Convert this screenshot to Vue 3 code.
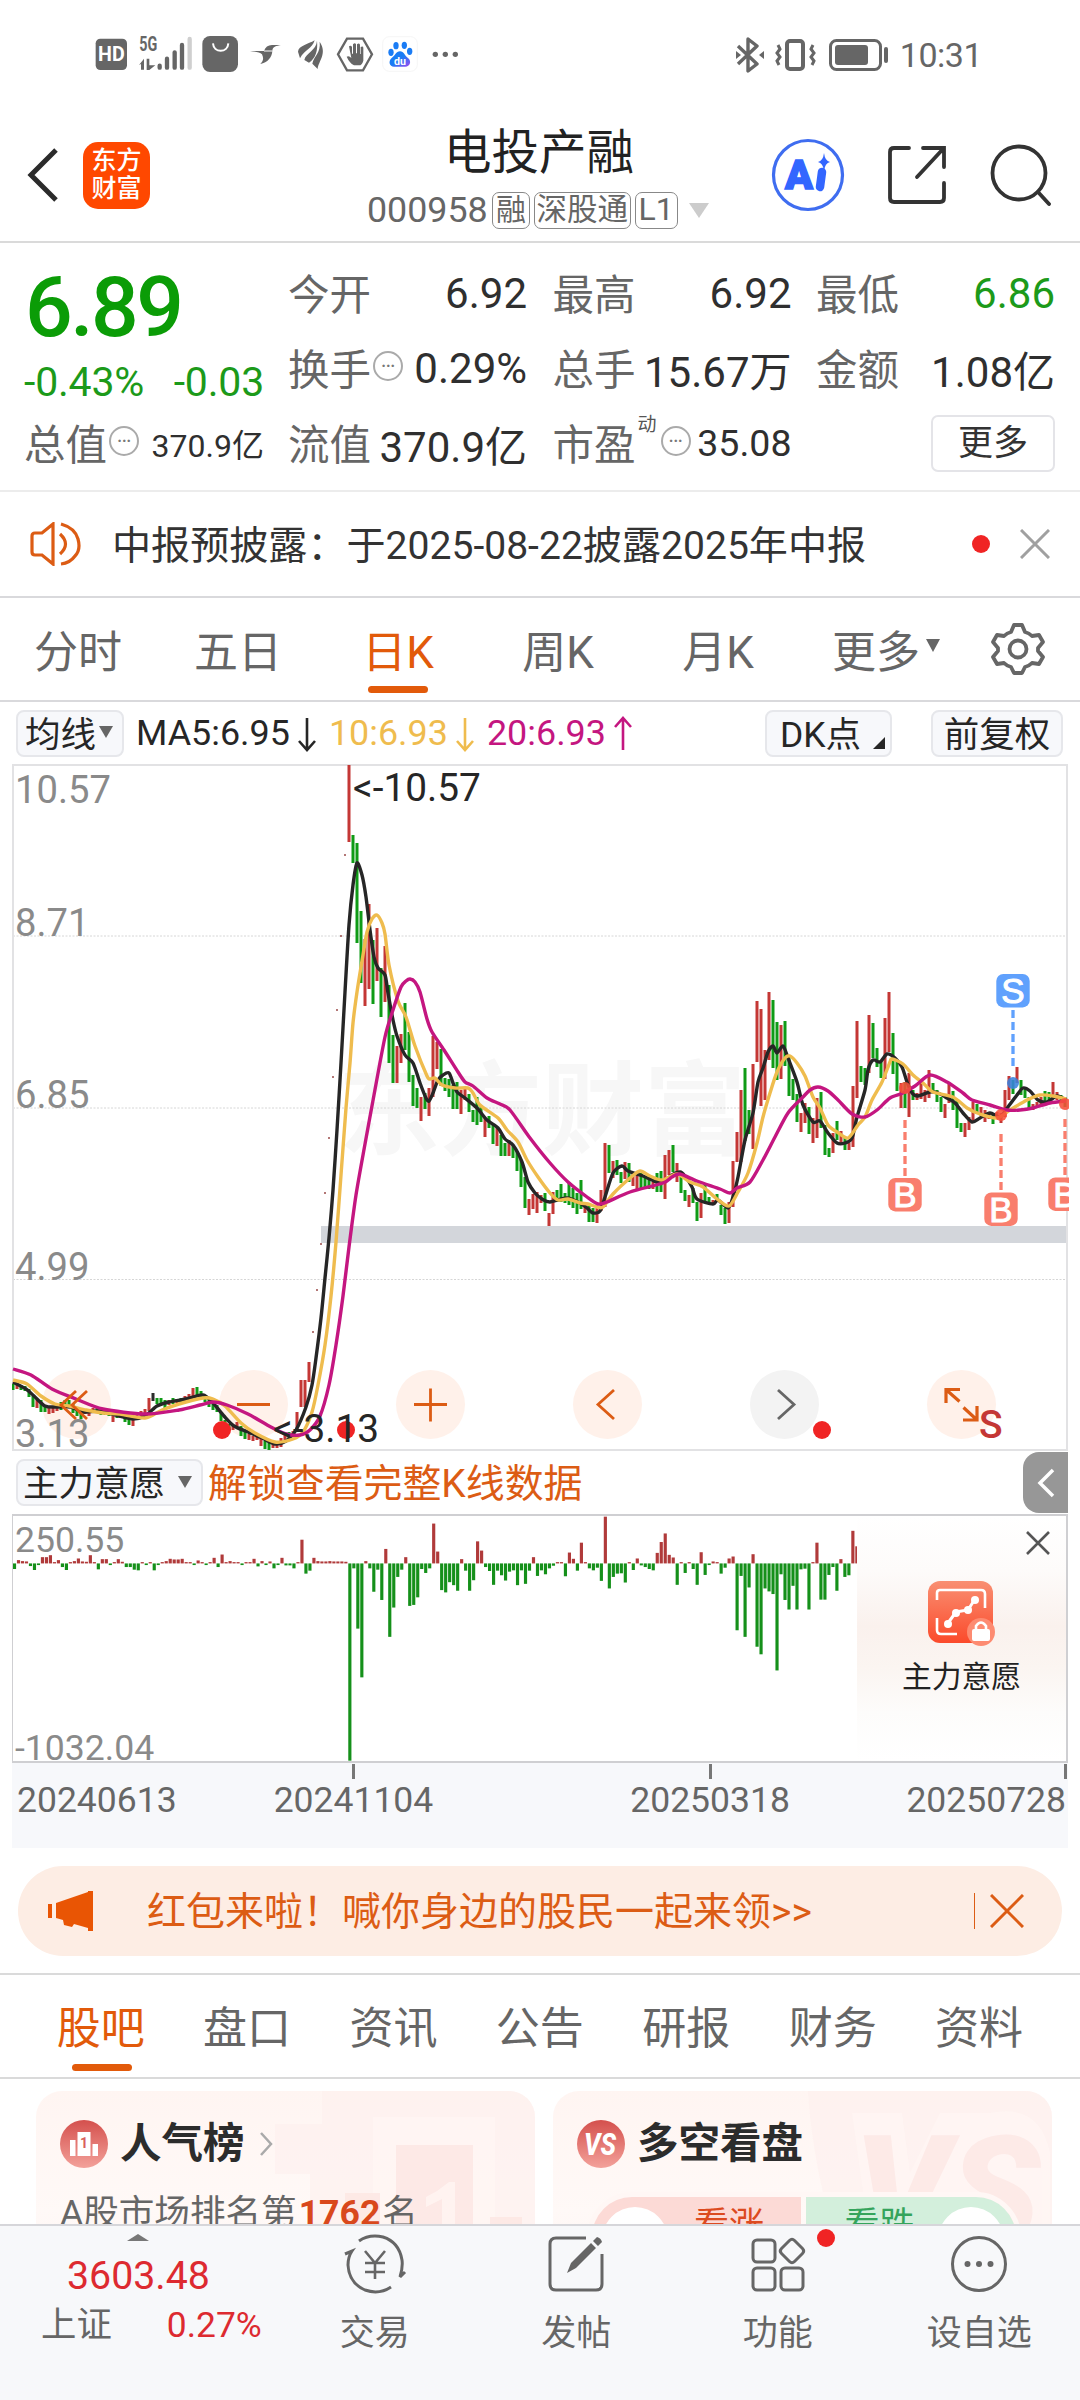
<script setup>
const kTabs = ['分时', '五日', '日K', '周K', '月K']
const infoTabs = ['股吧', '盘口', '资讯', '公告', '研报', '财务', '资料']

// Daily candles: direction + high/low in chart units, one every 4 units
const candleText = `g1384-1390 r1384-1389 g1385-1390 g1386-1391 g1389-1397 g1396-1407 r1400-1408 g1400-1412 g1405-1412 r1408-1414 r1406-1413 r1407-1411 g1402-1410 g1400-1408 g1400-1407 g1404-1413 g1408-1416 g1412-1419 r1410-1414 r1409-1416 r1408-1413 g1408-1413 g1410-1415 g1411-1415 g1411-1416 r1413-1422 g1413-1418 r1413-1418 g1416-1422 g1417-1425 r1416-1426 r1413-1420 r1411-1416 r1409-1416 r1398-1411 k1393-1401 g1398-1404 g1398-1404 g1400-1408 r1400-1405 g1398-1404 r1399-1403 g1398-1403 r1396-1403 r1394-1399 r1388-1397 g1387-1396 g1391-1397 g1396-1402 g1400-1407 g1402-1410 g1405-1412 g1413-1421 g1420-1426 g1424-1430 r1425-1430 r1422-1428 g1426-1436 g1431-1439 r1434-1440 r1436-1441 r1436-1440 r1438-1446 g1441-1449 g1443-1450 r1443-1448 r1442-1448 r1438-1447 r1432-1442 g1432-1438 r1431-1437 r1412-1430 r1380-1407 r1380-1407 r1362-1382 d1331-1333 d1289-1291 d1243-1245 d1192-1194 d1137-1139 d1076-1078 d1009-1011 d935-937 d854-856 r765-842 g835-863 g843-943 g911-983 r939-1006 r904-989 g940-1004 r928-981 g968-1017 r946-1002 g985-1063 g1035-1083 r1046-1083 r1034-1063 g1003-1050 g1032-1082 g1075-1106 g1088-1108 r1097-1121 g1093-1109 r1088-1116 r1036-1097 r1042-1069 g1049-1086 g1078-1091 g1079-1097 g1085-1109 g1082-1109 r1090-1114 r1087-1100 g1094-1112 g1110-1122 g1097-1125 g1105-1122 r1118-1137 g1116-1128 g1125-1144 r1127-1146 g1135-1156 g1143-1156 r1140-1156 g1145-1158 g1151-1171 g1160-1187 g1177-1208 r1199-1215 r1194-1209 r1192-1213 r1195-1203 g1193-1211 r1213-1226 r1192-1214 g1190-1202 g1184-1202 g1193-1203 g1182-1205 g1188-1208 g1193-1214 g1180-1209 r1202-1213 g1203-1222 g1208-1222 r1208-1223 r1190-1211 r1143-1207 g1145-1173 r1161-1178 g1160-1175 g1172-1183 r1162-1179 g1163-1182 r1172-1186 r1173-1189 g1173-1188 g1178-1189 g1180-1189 r1182-1189 g1173-1192 g1171-1192 r1155-1199 r1150-1175 g1145-1172 r1163-1182 g1175-1193 g1190-1201 r1195-1207 g1188-1203 g1202-1221 r1193-1218 g1185-1202 g1197-1203 r1200-1205 g1194-1202 g1205-1215 g1208-1224 r1202-1223 r1161-1207 r1132-1162 r1090-1162 g1068-1141 g1110-1134 r1064-1149 r1001-1062 r1009-1106 r1050-1100 r992-1060 g1000-1068 g1022-1080 r1025-1079 g1021-1066 g1055-1096 g1079-1100 g1094-1122 r1113-1132 r1103-1123 g1107-1134 r1118-1143 r1098-1138 g1092-1128 g1125-1155 g1148-1157 r1133-1153 g1121-1140 r1131-1143 g1137-1150 r1143-1150 r1086-1147 r1021-1098 g1066-1082 g1068-1085 r1015-1073 g1023-1058 g1048-1067 g1060-1078 r1018-1079 r992-1052 g1033-1074 g1060-1091 r1083-1108 g1082-1108 r1073-1117 g1090-1100 r1093-1100 r1082-1099 r1090-1102 r1070-1098 g1083-1093 g1090-1102 g1097-1112 r1104-1118 r1083-1103 g1091-1110 g1100-1128 g1123-1132 r1123-1137 r1117-1130 r1102-1122 g1104-1113 r1107-1116 r1110-1122 r1112-1119 g1115-1124 r1112-1119 r1113-1123 r1090-1117 r1076-1100 g1080-1094 r1067-1083 g1080-1095 g1087-1098 g1097-1108 r1104-1110 r1102-1108 r1097-1106 g1091-1103 g1092-1102 r1082-1098 r1092-1100 g1095-1102 g1097-1107`
const palette = { r: '#c43735', g: '#0f9b16', k: '#2b2b2b', d: '#8a2f2d' }
const candles = candleText.split(/\s+/).map((t, i) => {
  const [hi, lo] = t.slice(1).split('-').map(Number)
  return { x: 13 + i * 4, y: hi, h: lo - hi, w: t[0] === 'd' ? 1.3 : 3, c: palette[t[0]] }
})

function smooth(text) {
  const p = text.trim().split(/\s+/).map((s) => s.split(',').map(Number))
  let d = `M${p[0]}`
  for (let i = 0; i < p.length - 1; i++) {
    const a = p[i - 1] || p[i], b = p[i], c = p[i + 1], e = p[i + 2] || c
    const k = 7.5
    d += `C${b[0] + (c[0] - a[0]) / k},${b[1] + (c[1] - a[1]) / k} ${c[0] - (e[0] - b[0]) / k},${c[1] - (e[1] - b[1]) / k} ${c}`
  }
  return d
}
const ma5 = smooth('13,1382 26,1389 34,1396 45,1406 57,1407 71,1407 83,1412 100,1411 119,1416 133,1419 145,1416 157,1406 169,1402 186,1399 203,1395 213,1403 224,1416 234,1426 248,1432 262,1438 275,1444 286,1441 296,1430 306,1407 312,1385 316,1358 321,1318 325,1278 329,1238 333,1190 337,1130 341,1063 345,992 349,925 353,885 357,863 362,875 366,897 370,930 374,957 378,968 385,975 388,993 393,1020 397,1036 405,1055 413,1063 420,1083 426,1098 429,1101 433,1093 438,1080 443,1075 449,1073 453,1083 457,1092 465,1098 477,1108 487,1120 498,1128 505,1139 513,1145 522,1162 528,1182 535,1193 542,1199 550,1202 567,1198 580,1203 587,1208 593,1213 600,1211 605,1197 613,1173 622,1166 628,1171 643,1176 657,1182 665,1181 672,1175 680,1172 685,1176 692,1187 697,1199 713,1204 718,1200 728,1208 733,1197 738,1177 745,1140 753,1113 758,1082 763,1068 768,1052 773,1046 777,1053 783,1046 788,1058 797,1082 803,1105 813,1122 820,1121 828,1133 837,1143 845,1143 852,1138 857,1117 865,1090 868,1070 873,1060 880,1062 887,1054 895,1058 902,1067 907,1082 912,1093 918,1096 930,1092 938,1093 947,1098 955,1103 963,1113 972,1122 980,1118 990,1113 1000,1117 1008,1107 1017,1095 1023,1088 1030,1091 1038,1100 1047,1102 1057,1096 1066,1100')
const ma10 = smooth('13,1380 27,1384 41,1396 55,1404 69,1406 86,1410 103,1413 120,1414 145,1418 162,1410 179,1404 203,1398 213,1399 225,1406 241,1423 255,1433 275,1442 293,1439 303,1432 312,1412 318,1385 325,1345 331,1296 336,1242 341,1175 346,1108 350,1063 353,1023 357,992 362,961 367,932 372,919 377,915 382,923 385,934 389,965 398,1001 406,1017 415,1046 427,1076 430,1079 435,1078 442,1085 455,1088 468,1088 473,1093 480,1105 498,1118 507,1130 518,1142 527,1160 538,1177 550,1193 558,1200 568,1199 580,1203 588,1204 597,1207 603,1207 613,1194 630,1178 640,1171 650,1176 662,1180 677,1174 690,1182 703,1187 717,1199 729,1206 738,1192 748,1173 757,1143 763,1117 770,1093 777,1072 785,1058 790,1056 797,1063 805,1076 813,1097 820,1108 828,1125 837,1132 848,1138 858,1125 865,1117 872,1100 882,1082 890,1062 892,1059 903,1064 913,1075 923,1083 933,1092 953,1097 967,1108 980,1114 997,1118 1010,1110 1027,1100 1040,1095 1053,1096 1066,1099')
const ma20 = smooth('13,1369 31,1375 52,1389 76,1399 103,1409 145,1414 179,1410 200,1405 213,1402 227,1405 248,1414 269,1426 286,1434 300,1435 310,1430 320,1416 329,1385 336,1345 343,1296 349,1247 356,1195 365,1144 374,1095 385,1037 393,1010 401,987 406,981 410,979 415,982 420,992 427,1019 432,1032 444,1050 458,1072 465,1082 473,1086 487,1098 500,1104 510,1110 530,1138 550,1163 568,1182 587,1197 598,1204 607,1202 630,1192 663,1183 672,1177 680,1174 697,1181 720,1189 730,1193 737,1188 750,1182 763,1160 775,1137 788,1113 803,1097 810,1090 818,1087 828,1091 838,1100 852,1114 865,1117 877,1110 890,1098 903,1093 915,1086 930,1075 947,1082 963,1093 972,1100 990,1105 1007,1110 1020,1110 1033,1108 1050,1103 1066,1101')

const signals = [
  { t: 'B', x: 905, dot: 1088, from: 1120, to: 1177, y: 1178, c: '#f97e6d' },
  { t: 'B', x: 1001, dot: 1115, from: 1134, to: 1191, y: 1192.5, c: '#f97e6d' },
  { t: 'B', x: 1065, dot: 1104, from: 1119, to: 1176, y: 1177.5, c: '#f97e6d' },
  { t: 'S', x: 1013, dot: 1083, from: 1010, to: 1066, y: 974, c: '#60a1fd' },
]
const chartButtons = [76.5, 253.5, 430.5, 607.5, 784.5, 961.5]

// Net intention bars around the zero line at y=367
const barText = '20:384 43:375 48:387 89:378 95:387 141:385 182:378 188:378 194:386 199:388 211:372 222:388 316:378 374:376 397:382 414:373 420:373 426:382 443:398 449:389 508:966 513:382 519:565 525:713 536:382 542:453 548:386 554:478 565:590 571:501 577:408 583:386 594:496 600:493 606:470 612:384 617:396 623:382 641:448 647:455 653:424 658:433 664:450 676:389 682:450 688:418 705:378 711:390 716:432 722:389 728:403 734:419 740:392 746:388 751:433 757:388 763:429 769:389 780:405 786:388 792:400 798:382 804:374 821:406 838:389 856:382 861:388 867:380 873:420 885:443 891:408 897:398 902:397 908:425 920:387 931:373 937:378 943:384 949:388 983:432 995:396 1006:384 1012:432 1024:402 1047:398 1053:380 1071:570 1076:405 1082:590 1088:440 1100:620 1105:643 1111:443 1117:452 1123:460 1129:692 1134:400 1140:478 1146:507 1152:435 1158:507 1163:385 1169:383 1175:507 1192:477 1198:477 1204:402 1210:378 1216:450 1227:408 1233:403 25:357 31:360 37:361 60:348 66:348 72:342 83:357 107:360 112:352 118:361 124:362 130:342 147:354 153:354 170:354 176:362 240:360 246:353 252:355 258:355 264:353 287:358 310:350 321:340 333:360 368:353 380:360 391:361 409:350 438:295 455:350 461:360 467:361 473:361 479:360 485:361 490:361 496:361 502:362 531:360 560:323 589:348 629:246 635:331 670:354 693:300 699:328 774:348 827:334 832:353 844:304 879:225 925:352 954:335 960:302 966:276 972:341 978:349 1018:333 1036:361 1059:352 1065:346 1094:339 1187:304 1222:354 1239:268 1244:315'
const pitch = 5.812
const slots = {}
for (let i = 0; i < 212; i++) slots[i] = 367 + (i % 3 ? -4 : 5)
for (const t of barText.split(' ')) {
  const [x, y] = t.split(':').map(Number)
  slots[Math.round((x - 20) / pitch)] = y
}
const bars = Object.entries(slots).map(([i, y]) => ({
  x: 20 + i * pitch - 2.1,
  y: Math.min(y, 367),
  h: Math.abs(y - 367),
  c: y < 367 ? '#b03a3a' : '#15901a',
}))
</script>

<template>
  <div class="screen">
    <header class="status">
      <svg class="status-left" width="400" height="60" viewBox="0 0 1200 180">
        <rect x="47" y="41" width="94" height="94" rx="14" fill="#666" />
        <text x="94" y="109" text-anchor="middle" font-size="58" font-weight="700" fill="#fff" textLength="80" lengthAdjust="spacingAndGlyphs">HD</text>
        <text x="178" y="79" font-size="58" font-weight="700" fill="#666" textLength="54" lengthAdjust="spacingAndGlyphs">5G</text>
        <g stroke="#666" stroke-width="13" stroke-linecap="round">
          <path d="M239 122v6M261 101v27M284 82v46M306 60v68" />
          <path d="M329 42v86" stroke="#cfcfcf" />
        </g>
        <path d="M177 120l15-19v33h-9v-17zM200 101h8v20h18l-18 14h-8z" fill="#666" />
        <rect x="367" y="33" width="107" height="108" rx="23" fill="#666" />
        <path d="M399 55c2 30 44 30 46 0" fill="none" stroke="#fff" stroke-width="6" />
        <path d="M510 78h42c4-12 12-18 24-18h27c-13 3-25 3-26 18-1 19-14 35-36 39 10-11 10-18 5-29-6-7-20-8-36-10z" fill="#666" />
        <path d="M552 78h26" stroke="#fff" stroke-width="3" />
        <path d="M704 46C684 58 656 62 654 80l6 20c14-26 36-28 44-54zM711 47c-2 30-34 36-38 58l14 8c20-14 27-36 24-66zM719 50c4 34-18 44-22 66l16 16c2-24 30-46 6-82z" fill="#666" />
        <path d="M801 41h48l27 47-27 48h-48l-27-48z" fill="none" stroke="#666" stroke-width="7" />
        <path d="M807 64q6-5 9 2v20h3V58q6-6 9 0v27h3V58q6-5 9 1v28h2V66q8-4 8 3v38q-4 14-13 14h-15q-14-8-22-26 8-3 14 4z" fill="#666" />
        <rect x="908" y="35" width="104" height="104" rx="20" fill="#fff" stroke="#f0f0f0" stroke-width="2" />
        <defs>
          <linearGradient id="paw" x1="0" y1="0" x2="1" y2="1">
            <stop offset=".5" stop-color="#1a7cf5" /><stop offset="1" stop-color="#a04bf0" />
          </linearGradient>
        </defs>
        <g fill="#1a7cf5"><ellipse cx="948" cy="62" rx="8" ry="11" /><ellipse cx="973" cy="61" rx="8" ry="11" /><ellipse cx="933" cy="82" rx="8" ry="11" /><ellipse cx="989" cy="79" rx="8" ry="11" /></g>
        <path d="M960 79c12 0 14 14 24 20 12 10 6 26-8 26h-34c-14 0-18-16-7-26 10-6 13-20 25-20z" fill="url(#paw)" />
        <text x="960" y="119" text-anchor="middle" font-size="32" font-weight="700" fill="#fff">du</text>
        <g fill="#666"><circle cx="1066" cy="88" r="8" /><circle cx="1096" cy="88" r="8" /><circle cx="1126" cy="88" r="8" /></g>
      </svg>
      <div class="status-right">
        <svg width="154" height="36" viewBox="0 0 154 36" fill="none" stroke="#666">
          <path d="M2 9l19 18-9 7V2l9 7L2 27" stroke-width="3.400" stroke-linejoin="round" />
          <path d="M0 14l5 4-5 4M28 14l-5 4 5 4" fill="#666" stroke="none" />
          <rect x="51" y="4" width="16" height="28" rx="3" stroke-width="4" />
          <path d="M42 8l2 4-3 4 3 4-3 4 2 4M77 8l-2 4 3 4-3 4 3 4-2 4" stroke-width="3" />
          <rect x="94.500" y="3.500" width="50" height="29" rx="6" stroke-width="3" />
          <rect x="99" y="8" width="33" height="20" rx="3" fill="#666" stroke="none" />
          <path d="M150 12v12" stroke-width="4" stroke-linecap="round" />
        </svg>
        <span>10:31</span>
      </div>
    </header>

    <nav class="head">
      <div class="head-left">
        <svg width="32" height="56" viewBox="0 0 32 56" fill="none" stroke="#2b2b2b" stroke-width="5"><path d="M30 3L5 28l25 25" /></svg>
        <div class="logo"><span>东方</span><span>财富</span></div>
      </div>
      <div class="head-mid">
        <h1>电投产融</h1>
        <div class="code"><span class="num">000958</span><i>融</i><i class="wide">深股通</i><i class="lv">L1</i><b></b></div>
      </div>
      <div class="head-right">
        <svg width="74" height="74" viewBox="0 0 74 74">
          <circle cx="37" cy="37" r="34.500" fill="none" stroke="#3f6df0" stroke-width="3.200" />
          <text x="14" y="51" font-size="41" font-weight="900" fill="#3366ff" stroke="#3366ff" stroke-width="1.500">A</text>
          <path d="M51 34l-2 15" stroke="#3366ff" stroke-width="8.500" stroke-linecap="round" />
          <path d="M53 15q1 8 6 9-5 1-6 9-1-8-6-9 5-1 6-9z" fill="#3366ff" />
        </svg>
        <svg width="62" height="62" viewBox="0 0 62 62" fill="none" stroke="#333" stroke-width="3.800" stroke-linecap="round">
          <path d="M23 4H8q-4 0-4 4v46q0 4 4 4h46q4 0 4-4V39M37 4h21v19M57 5L31 33" />
        </svg>
        <svg width="62" height="64" viewBox="0 0 62 64" fill="none" stroke="#333" stroke-width="3.800" stroke-linecap="round">
          <circle cx="30" cy="30" r="26.500" /><path d="M49 49l11 12" />
        </svg>
      </div>
    </nav>

    <section class="quote">
      <div class="main">
        <div class="price">6.89</div>
        <div class="chg"><span>-0.43%</span><span>-0.03</span></div>
        <div class="cell"><label>总值</label><em>…</em><span class="v small">370.9亿</span></div>
      </div>
      <div class="grid">
        <div class="cell"><label>今开</label><span class="v">6.92</span></div>
        <div class="cell"><label>最高</label><span class="v">6.92</span></div>
        <div class="cell"><label>最低</label><span class="v green">6.86</span></div>
        <div class="cell"><label>换手</label><em>…</em><span class="v">0.29%</span></div>
        <div class="cell"><label>总手</label><span class="v">15.67万</span></div>
        <div class="cell"><label>金额</label><span class="v">1.08亿</span></div>
        <div class="cell"><label>流值</label><span class="v">370.9亿</span></div>
        <div class="cell"><label>市盈</label><sup>动</sup><em>…</em><span class="v mid">35.08</span></div>
        <div class="cell"><span class="more">更多</span></div>
      </div>
    </section>

    <section class="notice">
      <svg width="52" height="44" viewBox="0 0 52 44" fill="none" stroke="#dc5c14" stroke-width="3.200">
        <path d="M2 14q0-3 3-3h7L23 2v40L12 33H5q-3 0-3-3zM30 12q11 10 0 20M31 2q14 4 17 15t-3 17q-5 7-14 8" />
      </svg>
      <span class="notice-text">中报预披露：于2025-08-22披露2025年中报</span>
      <b class="dot"></b>
      <svg width="30" height="30" viewBox="0 0 30 30" stroke="#a0a0a0" stroke-width="3"><path d="M1 1l28 28M29 1L1 29" /></svg>
    </section>

    <nav class="ktabs">
      <span v-for="(t, i) in kTabs" :key="t" :class="{ on: i === 2 }">{{ t }}</span>
      <span class="ktabs-more">更多<b></b></span>
      <svg class="gear" width="54" height="54" viewBox="0 0 54 54" fill="none" stroke="#666" stroke-width="3.800" stroke-linejoin="round">
        <path d="M23 3h8l3 7q4 1 7 4l7-1 4 7-5 6v3l5 6-4 7-7-1q-3 3-7 4l-3 6h-8l-3-6q-4-1-7-4l-7 1-4-7 5-6v-3l-5-6 4-7 7 1q3-3 7-4z" /><circle cx="27" cy="27" r="8.500" />
      </svg>
    </nav>

    <div class="ma">
      <span class="chip"><span>均线</span><b class="tri"></b></span>
      <span class="ma-v">MA5:6.95<svg width="20" height="36" viewBox="0 0 20 36"><path d="M10 2v32M2 25l8 9 8-9" /></svg></span>
      <span class="ma-v yellow">10:6.93<svg width="20" height="36" viewBox="0 0 20 36"><path d="M10 2v32M2 25l8 9 8-9" /></svg></span>
      <span class="ma-v pink">20:6.93<svg width="20" height="36" viewBox="0 0 20 36"><path d="M10 34V2M2 11l8-9 8 9" /></svg></span>
      <span class="chip dk"><span>DK点</span><b></b></span>
      <span class="chip"><span>前复权</span></span>
    </div>

    <svg class="chart" width="1057" height="687" viewBox="12 764 1057 687">
      <text x="338" y="1147" font-size="102" font-weight="700" fill="#f7f7f7" textLength="408">东方财富</text>
      <circle v-for="x in chartButtons" :key="x" :cx="x" cy="1404.500" r="34.500" :fill="x === 784.5 ? '#f3f3f3' : '#fff1ea'" />
      <path d="M13 936H1067M13 1108H1067M13 1279.500H1067" stroke="#d6d6d6" stroke-width="1" stroke-dasharray="2 1.500" />
      <rect x="321" y="1226" width="746" height="17" fill="#d3d6db" />
      <rect x="13" y="765" width="1054" height="685" fill="none" stroke="#e2e2e4" stroke-width="2" />
      <g fill="#8a8a8a" font-size="38.200">
        <text x="15" y="802.500">10.57</text><text x="15" y="936">8.71</text><text x="15" y="1108">6.85</text><text x="15" y="1279.500">4.99</text><text x="15" y="1446.500">3.13</text>
      </g>
      <rect v-for="c in candles" :key="c.x" :x="c.x - c.w / 2" :y="c.y" :width="c.w" :height="c.h" :fill="c.c" />
      <g fill="none" stroke-width="3.400" stroke-linejoin="round">
        <path :d="ma5" stroke="#262626" /><path :d="ma10" stroke="#efbc4e" /><path :d="ma20" stroke="#c41680" />
      </g>
      <g fill="none" stroke="#dc5c14" stroke-width="2.800">
        <path d="M76 1391l-15 14 15 14M87 1391l-15 14 15 14M237 1404.500h33M414 1404.500h33M430.500 1388.500v33M614 1390l-16 14.500 16 14.500" />
        <path d="M778 1390l16 14.500-16 14.500" stroke="#666" />
        <path d="M946 1403v-13.500h14M946.500 1390l13 11.500M977 1406v14h-14M976.500 1419.500l-13-12" stroke-width="3.200" />
      </g>
      <text x="353" y="801" font-size="38.800" fill="#262626">&lt;-10.57</text>
      <g fill="#f02424"><circle cx="222" cy="1430" r="9" /><circle cx="346" cy="1430" r="9" /><circle cx="822" cy="1430" r="9" /></g>
      <text x="273" y="1441.500" font-size="38.800" fill="#262626">&lt;-3.13</text>
      <text x="979" y="1438" font-size="39" font-weight="500" fill="#c43735">S</text>
      <g v-for="s in signals" :key="s.x">
        <circle :cx="s.x" :cy="s.dot" r="6" :fill="s.t === 'S' ? '#3b82dc' : '#f7503a'" fill-opacity=".88" />
        <path :d="`M${s.x} ${s.from}V${s.to}`" :stroke="s.c" stroke-width="3.300" stroke-dasharray="8 4" />
        <rect :x="s.x - 16.7" :y="s.y" width="33.400" height="33.400" rx="7" :fill="s.c" />
        <text class="sig" :x="s.x" :y="s.y + 29" text-anchor="middle" font-size="35" fill="#fff" stroke="#fff" stroke-width="1">{{ s.t }}</text>
      </g>
    </svg>

    <div class="ind-head">
      <span class="chip"><span>主力意愿</span><b class="tri"></b></span>
      <span class="unlock">解锁查看完整K线数据</span>
      <span class="fold"><svg width="18" height="30" viewBox="0 0 18 30" fill="none" stroke="#fff" stroke-width="3.500"><path d="M16 2L3 15l13 13" /></svg></span>
    </div>

    <div class="ind">
      <svg class="ind-bars" viewBox="18 223 1533 744" preserveAspectRatio="none">
        <rect v-for="b in bars" :key="b.x" :x="b.x" :y="b.y" width="4.600" :height="b.h" :fill="b.c" />
      </svg>
      <div class="ind-scale"><span>250.55</span><span>-1032.04</span></div>
      <div class="lock">
        <svg class="lock-x" width="24" height="24" viewBox="0 0 24 24" stroke="#555" stroke-width="2.600"><path d="M1 1l22 22M23 1L1 23" /></svg>
        <svg width="68" height="66" viewBox="0 0 68 66">
          <defs><linearGradient id="lk" x1="0" y1="0" x2="0" y2="1"><stop offset="0" stop-color="#f98f72" /><stop offset="1" stop-color="#fb4a2b" /></linearGradient></defs>
          <rect width="65" height="62" rx="12" fill="url(#lk)" />
          <path d="M9 19v-7q0-3 3-3h41q4 0 4 4v14M9 37v12q0 4 4 4h16" fill="none" stroke="#fff" stroke-width="2.600" />
          <path d="M20 42l8-11 12-2 7-11" fill="none" stroke="#fff" stroke-width="3" />
          <g fill="#fff"><circle cx="20" cy="43" r="4" /><circle cx="28" cy="32" r="4" /><circle cx="40" cy="29" r="4" /><circle cx="47" cy="19" r="4" /></g>
          <circle cx="53" cy="51" r="14" fill="#fd8b71" />
          <rect x="44" y="48" width="18" height="12" rx="2" fill="#fff" /><path d="M48 49v-4q5-7 10 0v4" fill="none" stroke="#fff" stroke-width="2.600" />
        </svg>
        <span>主力意愿</span>
      </div>
    </div>
    <div class="axis"><span>20240613</span><span class="t2">20241104</span><span class="t3">20250318</span><span class="t4">20250728</span></div>

    <div class="banner">
      <svg width="46" height="40" viewBox="0 0 46 40" fill="#e95504"><path d="M0 13h4v14H0zM8 12L40 1V0h5v40h-5v-3l-14-4-2 3-8-2-1-5-7-2z" /></svg>
      <span>红包来啦！喊你身边的股民一起来领&gt;&gt;</span>
      <i></i>
      <svg width="34" height="34" viewBox="0 0 34 34" stroke="#dc5c14" stroke-width="3"><path d="M1 1l32 32M33 1L1 33" /></svg>
    </div>

    <nav class="itabs"><span v-for="(t, i) in infoTabs" :key="t" :class="{ on: i === 0 }">{{ t }}</span></nav>

    <div class="cards">
      <div class="card">
        <svg class="deco" width="260" height="136" viewBox="0 0 260 136">
          <path d="M0 33h47V0h213v136H35V83H0z" fill="#feefec" opacity=".55" />
          <path d="M98 26h122v110H98z" fill="#fff6f4" opacity=".7" />
          <path d="M121 54h77v82h-77zM70 102h35v34H70zM215 126h32v10h-32z" fill="#fde6e2" opacity=".8" />
          <path d="M162 100l12-9h6v45h-13v-28l-16 8v-10z" fill="#fff3f0" />
        </svg>
        <div class="card-h">
          <svg width="48" height="48" viewBox="0 0 48 48">
            <defs><linearGradient id="rd" x1="0" y1="0" x2="0" y2="1"><stop offset="0" stop-color="#d4504d" /><stop offset="1" stop-color="#f3a19a" /></linearGradient></defs>
            <circle cx="24" cy="24" r="24" fill="url(#rd)" /><path d="M17.500 12h13v24h-13zM10 20h5.500v16H10zM32.500 24h5.500v12h-5.500z" fill="#fff" />
            <text x="24" y="28" font-size="14" font-weight="700" text-anchor="middle" fill="#d9615c">1</text>
          </svg>
          <h2>人气榜</h2>
          <svg width="14" height="24" viewBox="0 0 14 24" fill="none" stroke="#aaa" stroke-width="2.500"><path d="M2 1l10 11L2 23" /></svg>
        </div>
        <p>A股市场排名第<b>1762</b>名</p>
      </div>
      <div class="card">
        <svg class="deco" width="260" height="136" viewBox="0 0 260 136">
          <path d="M16 0h244v136H40q-20-70-24-136z" fill="#feefec" opacity=".55" />
          <path d="M60 22h50l8 60 30-60h50q50-10 60 40v74H76z" fill="#fff6f4" opacity=".7" />
          <text x="62" y="151" font-size="150" font-weight="900" font-style="italic" fill="#fde6e2" opacity=".7" textLength="186" lengthAdjust="spacingAndGlyphs">VS</text>
        </svg>
        <div class="card-h">
          <svg width="48" height="48" viewBox="0 0 48 48"><circle cx="24" cy="24" r="24" fill="url(#rd)" /><text x="23" y="35" font-size="32" font-weight="800" font-style="italic" text-anchor="middle" fill="#fff" textLength="32" lengthAdjust="spacingAndGlyphs">VS</text></svg>
          <h2>多空看盘</h2>
        </div>
        <div class="vote"><span class="up"><i></i>看涨</span><span class="down">看跌<i></i></span></div>
      </div>
    </div>

    <footer class="bottom">
      <div class="index">
        <b></b>
        <strong>3603.48</strong>
        <div><span>上证</span><em>0.27%</em></div>
      </div>
      <div class="item">
        <svg width="68" height="60" viewBox="0 0 68 60" fill="none" stroke="#666" stroke-width="3">
          <path d="M18 7Q28 0 42 3 58 8 61 26q1 7-2 17l5-5M50 53Q38 61 24 56 8 49 7 31q0-8 4-14l-7 3" />
          <path d="M24 17l10 12 10-12M24 29h20M24 38h20M34 29v16" stroke-width="2.600" />
        </svg>
        <span>交易</span>
      </div>
      <div class="item">
        <svg width="60" height="60" viewBox="0 0 60 60" fill="none" stroke="#666" stroke-width="3">
          <path d="M40 4H10q-6 0-6 6v40q0 6 6 6h40q6 0 6-6V20" />
          <path d="M21 39l4-10L45 9l5 5-20 20zM47 7l4-4q4 1 5 5l-4 4z" fill="#666" stroke="none" />
        </svg>
        <span>发帖</span>
      </div>
      <div class="item">
        <svg width="60" height="60" viewBox="0 0 60 60" fill="none" stroke="#666" stroke-width="3">
          <rect x="5" y="6" width="22" height="22" rx="4" /><rect x="5" y="34" width="22" height="22" rx="4" /><rect x="33" y="34" width="22" height="22" rx="4" />
          <path d="M41.500 6.500q2.500-2.500 5 0l8 8q2.500 2.500 0 5l-8 8q-2.500 2.500-5 0l-8-8q-2.500-2.500 0-5z" />
        </svg>
        <span>功能</span>
        <b class="badge"></b>
      </div>
      <div class="item">
        <svg width="60" height="60" viewBox="0 0 60 60"><circle cx="30" cy="30" r="26.500" fill="none" stroke="#666" stroke-width="3" /><g fill="#666"><circle cx="18.500" cy="30" r="3" /><circle cx="30" cy="30" r="3" /><circle cx="41.500" cy="30" r="3" /></g></svg>
        <span>设自选</span>
      </div>
    </footer>
  </div>
</template>

<style>
body { background: #fff; }
</style>

<style scoped>
.screen { width: 1080px; height: 2400px; overflow: hidden; display: flex; flex-direction: column; background: #fff; font-family: Roboto, "Noto Sans CJK SC", sans-serif; color: #333; }
.screen > * { flex: none; box-sizing: border-box; }
svg { display: block; flex: none; }
i, em { font-style: normal; }

.status { height: 108px; padding: 25px 98px 0 80px; display: flex; justify-content: space-between; align-items: flex-start; }
.status-right { display: flex; align-items: center; gap: 10px; height: 60px; font-size: 34px; line-height: 60px; color: #666; }
.status-right span { letter-spacing: -.5px; }

.head { height: 135px; border-bottom: 2px solid #dadada; display: grid; grid-template-columns: 366px 1fr 324px; }
.head-left { display: flex; align-items: center; gap: 25px; padding-left: 26px; padding-top: 1px; }
.logo { width: 67px; height: 67px; border-radius: 15px; background: #ff4800; color: #fff; display: flex; flex-direction: column; align-items: center; justify-content: center; font-size: 25px; line-height: 28px; font-weight: 500; }
.head-mid { display: flex; flex-direction: column; }
h1 { margin: 12px 0 0 78px; font-size: 47.500px; line-height: 66px; font-weight: 400; color: #222; }
.code { display: flex; align-items: center; height: 50px; font-size: 35.800px; color: #666; padding-left: 1px; margin-top: -1px; }
.code .num { margin-right: 4px; width: 121px; }
.code i { box-sizing: border-box; height: 37px; line-height: 33px; border: 1.500px solid #888; border-radius: 7px; font-size: 30px; padding: 0 3px; margin-right: 4px; }
.code i.wide { font-size: 30.500px; padding: 0 1.500px; }
.code i.lv { font-size: 32px; padding: 0 3px; }
.code b { margin-left: 7px; border: 10.500px solid transparent; border-top: 15px solid #ccc; border-bottom: 0; }
.head-right { display: flex; align-items: center; padding-left: 15px; padding-top: 1px; }
.head-right svg:nth-child(2) { margin-left: 41px; }
.head-right svg:nth-child(3) { margin-left: 41px; }

.quote { height: 249px; border-bottom: 2px solid #ececec; padding: 15px 24px 0; display: flex; }
.main { width: 240px; margin-right: 24px; }
.price { height: 75px; line-height: 99px; font-size: 84px; font-weight: 500; letter-spacing: -2.500px; color: #0b9c07; padding-left: 1px; }
.chg { height: 75px; line-height: 98px; display: flex; justify-content: space-between; font-size: 41px; color: #1c9a1a; letter-spacing: -.2px; }
.grid { display: grid; grid-template-columns: 239px 238px 239px; column-gap: 25.500px; grid-auto-rows: 75px; }
.cell { display: flex; align-items: center; height: 75px; font-size: 42px; }
.cell label { font-size: 41.500px; color: #666; margin-top: -8px; }
.cell em { box-sizing: border-box; width: 30px; height: 30px; border: 2px solid #aaa; border-radius: 50%; color: #777; font-size: 22px; line-height: 13px; text-align: center; margin: -9px 0 0 2px; }
.cell sup { font-size: 19px; line-height: 20px; color: #555; margin: -42px 2px 0 2px; }
.cell .v { margin-left: auto; color: #2f2f2f; white-space: nowrap; margin-top: -5px; }
.grid .cell:nth-child(3n+2) .v { margin-right: -1px; }
.cell .small { font-size: 32px; }
.cell .mid { font-size: 37.500px; }
.cell .green { color: #1c9a1a; }
.more { margin-left: auto; box-sizing: border-box; width: 124px; height: 57px; border: 2px solid #e4e4e8; border-radius: 7px; text-align: center; line-height: 53px; font-size: 35px; color: #333; margin-top: -5px; }

.notice { height: 106px; border-bottom: 2px solid #d9d9dc; padding: 0 30px; display: flex; align-items: center; }
.notice-text { margin-left: 30px; font-size: 39.100px; white-space: nowrap; margin-top: -4px; }
.dot { width: 18px; height: 18px; border-radius: 50%; background: #f02424; margin: 0 30px 0 auto; }

.ktabs { height: 104px; border-bottom: 2px solid #d9d9dc; display: flex; align-items: center; }
.ktabs span, .itabs span { position: relative; width: 160px; text-align: center; font-size: 44px; color: #666; line-height: 111px; height: 102px; flex: none; }
.ktabs span:first-child { margin-left: -2px; }
.ktabs span.on, .itabs span.on { color: #e25a0a; }
.on::after { content: ""; position: absolute; left: 50%; bottom: 7px; width: 60px; height: 7px; margin-left: -30px; border-radius: 4px; background: #e25a0a; }
.ktabs .ktabs-more { display: flex; align-items: flex-start; width: 144px; padding-left: 34px; box-sizing: content-box; width: 110px; }
.ktabs-more b { margin-left: 6px; border: 7.500px solid transparent; border-top: 13px solid #666; border-bottom: 0; margin-top: 41px; }
.gear { margin-left: 49px; margin-top: -1px; }

.ma { height: 62px; padding: 0 17px 0 16px; display: flex; align-items: center; }
.chip { box-sizing: border-box; height: 47px; padding: 0 7px; display: inline-flex; align-items: center; font-size: 35.500px; color: #262626; background: #f7f8fb; border: 2px solid #e6e7eb; border-radius: 8px; white-space: nowrap; }
.chip span { margin-top: -4px; }
.tri { border: 7.500px solid transparent; border-top: 12px solid #666; border-bottom: 0; margin: -2px 0 0 3px; }
.ma > .chip:first-child { width: 108px; }
.ma-v { display: flex; align-items: center; gap: 7px; font-size: 35.900px; color: #262626; margin-left: 12px; white-space: nowrap; }
.ma-v svg { fill: none; stroke: currentColor; stroke-width: 2.600px; margin-top: 2px; }
.yellow { color: #efbc4e; margin-left: 12px; }
.pink { color: #c41680; margin-left: 12px; }
.ma .dk { margin-left: auto; margin-right: 39px; width: 127px; padding-left: 13px; }
.dk b { border: 6px solid #262626; border-top-color: transparent; border-left-color: transparent; margin: 20px 0 0 12px; }
.ma > .chip:last-child { width: 132px; justify-content: center; }

.chart { margin-left: 12px; }
.sig { font-family: "Liberation Sans", sans-serif; }

.ind-head { height: 63px; padding: 0 12px 0 16px; display: flex; align-items: center; }
.ind-head .chip { padding: 0 5px; width: 187px; }
.ind-head .tri { margin-left: 13px; }
.unlock { font-size: 38.900px; color: #dc5c14; margin: -5px 0 0 5px; white-space: nowrap; }
.fold { margin-left: auto; width: 45px; height: 61px; background: #979797; border-radius: 16px 0 0 16px; display: flex; align-items: center; justify-content: center; }

.ind { position: relative; height: 249px; width: 1056px; margin-left: 12px; border: 2px solid #cfcfd2; border-left-width: 1px; display: flex; justify-content: space-between; }
.ind-bars { position: absolute; inset: 0; width: 100%; height: 100%; }
.ind-scale { position: relative; display: flex; flex-direction: column; justify-content: space-between; font-size: 35.600px; color: #8a8a8a; padding: 2px 0 0 2px; line-height: 44px; height: 254px; box-sizing: border-box; margin-bottom: -9px; }
.lock { position: relative; width: 209px; height: 245px; background: linear-gradient(180deg, #fff 0%, #fdfbfa 22%, #faf1ed 45%, #fbf5f1 62%, #fdfcfb 80%, #fff 100%); display: flex; flex-direction: column; align-items: center; padding-top: 65px; box-sizing: border-box; }
.lock span { font-size: 29.800px; line-height: 44px; margin-top: 8px; color: #222; }
.lock-x { position: absolute; right: 16px; top: 15px; }

.axis { height: 85px; width: 1056px; margin-left: 12px; background: #f7f8fb; display: flex; padding: 0 2px 0 5px; font-size: 35.500px; line-height: 74px; color: #666; }
.axis span { position: relative; white-space: nowrap; }
.axis .t2 { margin-left: 97px; }
.axis .t3 { margin-left: 197px; }
.axis .t4 { margin-left: auto; }
.axis .t2::before, .axis .t3::before, .axis .t4::before { content: ""; position: absolute; top: 1px; left: 50%; width: 3px; height: 15px; margin-left: -1px; background: #777; }
.axis .t4::before { left: auto; right: -1px; }

.banner { margin: 18px 18px 17px; height: 90px; border-radius: 45px; background: #fdede4; padding: 0 38px 0 30px; display: flex; align-items: center; font-size: 39px; color: #dc5c14; }
.banner span { margin: -6px 0 0 53px; white-space: nowrap; }
.banner i { width: 1.500px; height: 36px; background: #dc5c14; margin: 0 15px 0 auto; }

.itabs { height: 106px; border-top: 2px solid #dadada; border-bottom: 2px solid #dadada; padding-left: 27.500px; display: flex; }
.itabs span { width: 146.400px; line-height: 109px; }
.itabs .on::after { margin-left: -29px; bottom: 6px; }

.cards { height: 145px; padding: 12px 28px 0 36px; display: flex; gap: 18px; overflow: hidden; }
.card { position: relative; width: 499px; height: 200px; border-radius: 26px; background: linear-gradient(180deg, #fff5f2, #fff9f7 60%, #fff5f3); flex: none; box-sizing: border-box; padding: 24px 24px 0; overflow: hidden; }
.deco { position: absolute; right: 0; top: 0; }
.card-h { position: relative; display: flex; align-items: center; height: 58px; }
h2 { margin: 0 14px 0 12px; font-size: 41.500px; line-height: 58px; font-weight: 700; color: #2c2c2c; }
.card p { position: relative; margin: 14px 0 0; font-size: 35.600px; line-height: 52px; color: #666; white-space: nowrap; }
.card p b { color: #d9481c; margin: 0 2px; }
.vote { position: relative; display: flex; gap: 5px; width: 424px; height: 80px; margin: 19px 0 0 10px; border: 5px solid #fff7f5; border-radius: 45px; }
.vote span { width: 210px; height: 80px; box-sizing: border-box; display: flex; align-items: flex-start; font-size: 35px; line-height: 56px; overflow: hidden; padding-top: 1px; }
.up { background: #fcdad6; color: #dc4a20; border-radius: 40px 0 0 40px; }
.down { background: #d3efdc; color: #35a45c; border-radius: 0 40px 40px 0; }
.vote i { width: 66px; height: 66px; border-radius: 50%; background: #fff; margin-top: 9px; flex: none; }
.up i { margin-left: 10px; margin-right: 26px; }
.down i { margin-left: 24px; }
.vote .down { padding-left: 38px; }

.bottom { height: 178px; border-top: 2px solid #d6d6da; background: #f7f8fa; display: flex; }
.index { width: 274px; display: flex; flex-direction: column; color: #dd2a30; }
.index > b { margin: 8px 0 0 127px; width: 0; border: 11px solid transparent; border-bottom: 7px solid #777; border-top: 0; }
.index strong { font-weight: 400; font-size: 39.300px; line-height: 50px; margin: 10px 0 0 67px; }
.index div { display: flex; font-size: 35.400px; line-height: 48px; }
.index span { color: #666; margin: 0 55px 0 41px; }
.item { position: relative; width: 201.500px; display: flex; flex-direction: column; align-items: center; padding-top: 8px; }
.item span { font-size: 35px; line-height: 50px; color: #666; margin-top: 15px; }
.badge { position: absolute; left: 140px; top: 3px; width: 18px; height: 18px; border-radius: 50%; background: #f02424; }
</style>
